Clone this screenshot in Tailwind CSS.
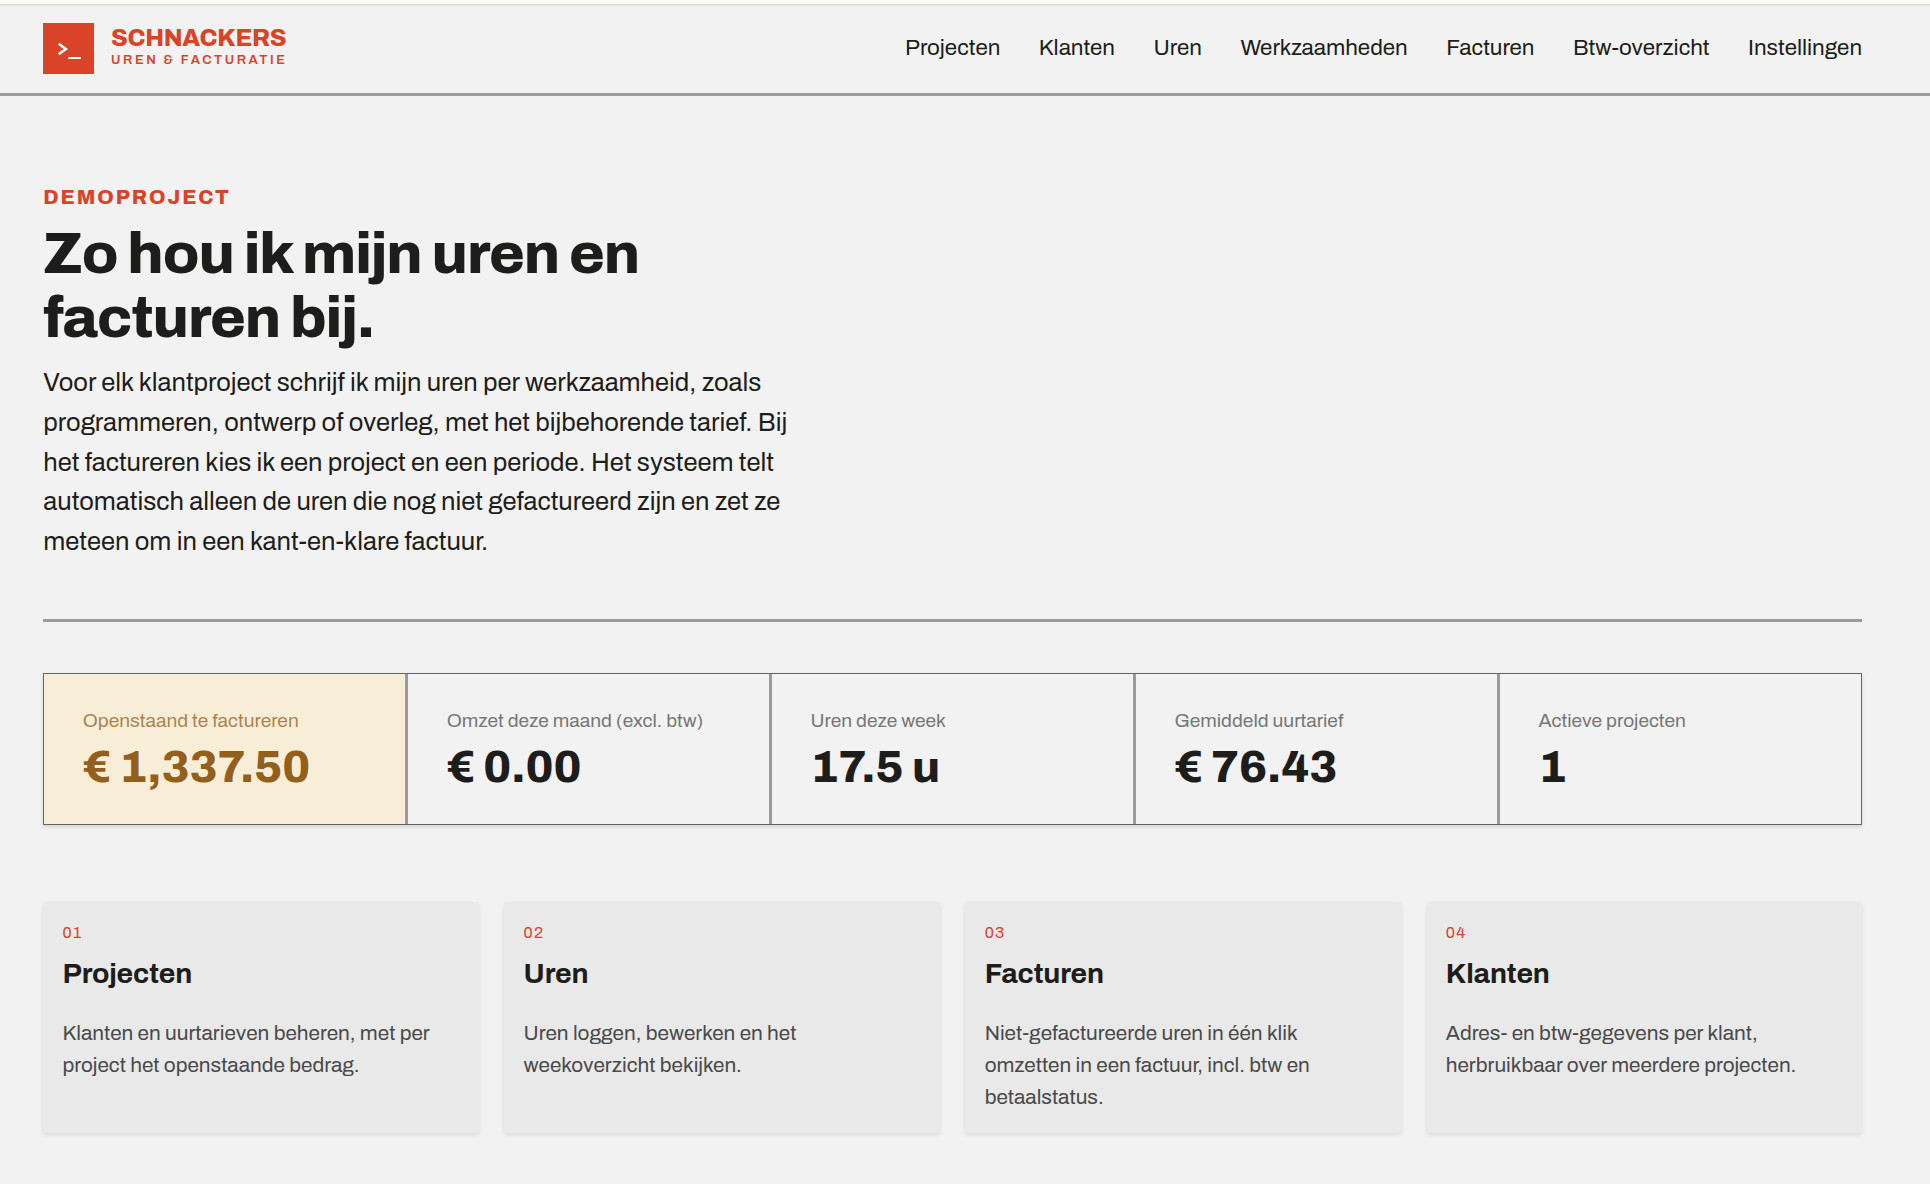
<!DOCTYPE html>
<html lang="nl">
<head>
    <meta charset="UTF-8">
    <meta name="viewport" content="width=device-width, initial-scale=1.0">
    <title>Schnackers - Uren &amp; Facturatie</title>
    <script src="https://cdn.jsdelivr.net/npm/@tailwindcss/browser@4"></script>
    <style>
        body { font-family: Archivo, 'Liberation Sans', Arial, sans-serif; }
        .display { font-family: Archivo, Inter, sans-serif; }
    </style>
</head>
<body class="bg-[#f2f2f2] text-[#1d1d1b] min-h-screen overflow-hidden">
    <div class="h-1.5 bg-[#f9fcf1] border-b-2 border-[#dfe2d5]"></div>

    <header class="flex items-start justify-between h-[90px] pt-[17px] pl-[43px] pr-[68px] border-b-3 border-[#9b9b9b]">
        <a href="#" class="flex items-start gap-[17px] text-[#d94328]">
            <svg class="size-[51px] bg-[#d94328]" viewBox="0 0 51 51" fill="none" stroke="#fff">
                <path d="M15.7 20.8 L22.8 26 L15.7 31.2" stroke-width="2.6"/>
                <path d="M25.3 35 H38" stroke-width="2"/>
            </svg>
            <span class="display block pt-[3px]">
                <span class="block text-[24px] leading-6 font-extrabold tracking-[-0.3px]">SCHNACKERS</span>
                <span class="block mt-0.5 text-[13px] leading-4 font-semibold tracking-[2.6px]">UREN &amp; FACTURATIE</span>
            </span>
        </a>
        <nav class="flex gap-[38.5px] mt-2 text-[22.4px] leading-[34px]">
            <a href="#">Projecten</a>
            <a href="#">Klanten</a>
            <a href="#">Uren</a>
            <a href="#">Werkzaamheden</a>
            <a href="#">Facturen</a>
            <a href="#">Btw-overzicht</a>
            <a href="#">Instellingen</a>
        </nav>
    </header>

    <main class="pl-[43.3px] pr-[68px]">
        <section class="h-[526px] pt-[86px] border-b-3 border-[#9b9b9b]">
            <p class="display text-[20.4px] leading-[30px] font-extrabold tracking-[1.9px] text-[#d94328]">DEMOPROJECT</p>
            <h1 class="display mt-2.5 text-[58px] leading-[1.1] font-extrabold tracking-[-1.1px]">Zo hou ik mijn uren en<br>facturen bij.</h1>
            <p class="mt-[13.5px] w-[760px] text-[25.6px] leading-[39.8px]">Voor elk klantproject schrijf ik mijn uren per werkzaamheid, zoals programmeren, ontwerp of overleg, met het bijbehorende tarief. Bij het factureren kies ik een project en een periode. Het systeem telt automatisch alleen de uren die nog niet gefactureerd zijn en zet ze meteen om in een kant-en-klare factuur.</p>
        </section>

        <!-- Kerncijfers -->
        <section class="grid grid-cols-5 gap-[3px] h-[152px] mt-[51px] border border-[#666] bg-[#9b9b9b] shadow-[0_2px_4px_rgba(0,0,0,0.12)]">
            <div class="bg-[#f8edd7] pl-[38.4px] pt-[33px] text-[#935f1c]">
                <div class="text-[19.2px] leading-7 text-[#935f1c]/75">Openstaand te factureren</div>
                <div class="display mt-1.5 text-[44.8px] leading-[52px] font-extrabold">€ 1,337.50</div>
            </div>
            <div class="bg-[#f2f2f2] pl-[38.4px] pt-[33px]">
                <div class="text-[19.2px] leading-7 text-[#777]">Omzet deze maand (excl. btw)</div>
                <div class="display mt-1.5 text-[44.8px] leading-[52px] font-extrabold">€ 0.00</div>
            </div>
            <div class="bg-[#f2f2f2] pl-[38.4px] pt-[33px]">
                <div class="text-[19.2px] leading-7 text-[#777]">Uren deze week</div>
                <div class="display mt-1.5 text-[44.8px] leading-[52px] font-extrabold">17.5 u</div>
            </div>
            <div class="bg-[#f2f2f2] pl-[38.4px] pt-[33px]">
                <div class="text-[19.2px] leading-7 text-[#777]">Gemiddeld uurtarief</div>
                <div class="display mt-1.5 text-[44.8px] leading-[52px] font-extrabold">€ 76.43</div>
            </div>
            <div class="bg-[#f2f2f2] pl-[38.4px] pt-[33px]">
                <div class="text-[19.2px] leading-7 text-[#777]">Actieve projecten</div>
                <div class="display mt-1.5 text-[44.8px] leading-[52px] font-extrabold">1</div>
            </div>
        </section>

        <!-- Onderdelen -->
        <section class="grid grid-cols-4 gap-[25.6px] h-[231px] mt-[77px]">
            <a href="#" class="block rounded-[2px] bg-[#e9e9e9] px-[19.2px] pt-[19px] shadow-[0_2px_4px_rgba(0,0,0,0.1)]">
                <div class="text-[16px] leading-6 tracking-[1.3px] text-[#d94328]">01</div>
                <h2 class="display mt-3 text-[28.4px] leading-[34px] font-bold tracking-[-0.15px]">Projecten</h2>
                <p class="mt-[26px] text-[20.8px] leading-[1.55] text-[#4a4a4a]">Klanten en uurtarieven beheren, met per project het openstaande bedrag.</p>
            </a>
            <a href="#" class="block rounded-[2px] bg-[#e9e9e9] px-[19.2px] pt-[19px] shadow-[0_2px_4px_rgba(0,0,0,0.1)]">
                <div class="text-[16px] leading-6 tracking-[1.3px] text-[#d94328]">02</div>
                <h2 class="display mt-3 text-[28.4px] leading-[34px] font-bold tracking-[-0.15px]">Uren</h2>
                <p class="mt-[26px] text-[20.8px] leading-[1.55] text-[#4a4a4a]">Uren loggen, bewerken en het<br>weekoverzicht bekijken.</p>
            </a>
            <a href="#" class="block rounded-[2px] bg-[#e9e9e9] px-[19.2px] pt-[19px] shadow-[0_2px_4px_rgba(0,0,0,0.1)]">
                <div class="text-[16px] leading-6 tracking-[1.3px] text-[#d94328]">03</div>
                <h2 class="display mt-3 text-[28.4px] leading-[34px] font-bold tracking-[-0.15px]">Facturen</h2>
                <p class="mt-[26px] text-[20.8px] leading-[1.55] text-[#4a4a4a]">Niet-gefactureerde uren in één klik<br>omzetten in een factuur, incl. btw en betaalstatus.</p>
            </a>
            <a href="#" class="block rounded-[2px] bg-[#e9e9e9] px-[19.2px] pt-[19px] shadow-[0_2px_4px_rgba(0,0,0,0.1)]">
                <div class="text-[16px] leading-6 tracking-[1.3px] text-[#d94328]">04</div>
                <h2 class="display mt-3 text-[28.4px] leading-[34px] font-bold tracking-[-0.15px]">Klanten</h2>
                <p class="mt-[26px] text-[20.8px] leading-[1.55] text-[#4a4a4a]">Adres- en btw-gegevens per klant,<br>herbruikbaar over meerdere projecten.</p>
            </a>
        </section>
    </main>
</body>
</html>
